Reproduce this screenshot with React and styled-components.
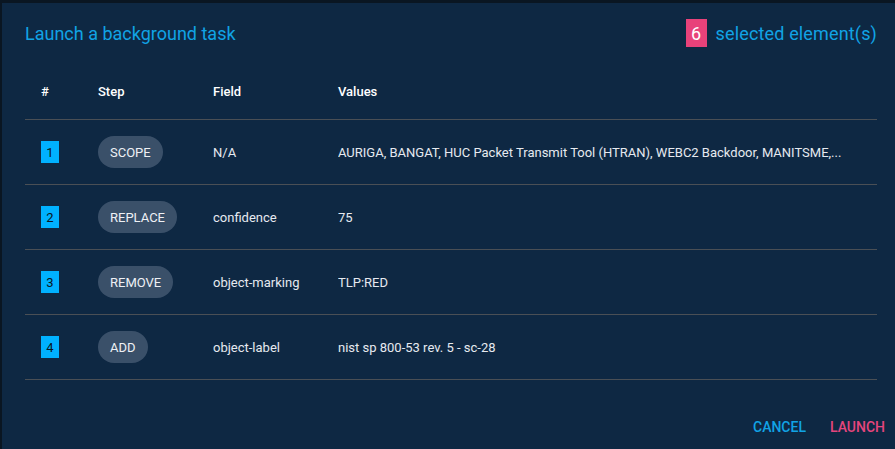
import styled, { createGlobalStyle } from "styled-components";

const GlobalStyle = createGlobalStyle`
  html, body {
    margin: 0;
    padding: 0;
    background: #0a1622;
    overflow: hidden;
  }
  body {
    font-family: Roboto, "Noto Sans", sans-serif;
  }
`;

const Dialog = styled.div`
  margin: 3px 0 0 2px;
  height: 446px;
  background-color: #0e2843;
  box-sizing: border-box;
  display: flex;
  flex-direction: column;
  color: #e9edf2;
`;

const Header = styled.div`
  display: flex;
  align-items: center;
  justify-content: space-between;
  height: 60px;
  padding: 0 18px 0 23px;
`;

const Title = styled.h2`
  margin: 0;
  font-size: 18px;
  font-weight: 400;
  color: #11a3e5;
`;

const Selected = styled.div`
  display: flex;
  align-items: center;
  gap: 9px;
  font-size: 18px;
  letter-spacing: 0.15px;
  color: #11a3e5;
`;

const Count = styled.span`
  display: inline-flex;
  align-items: center;
  justify-content: center;
  width: 21px;
  height: 28px;
  background-color: #e8427a;
  color: #ffffff;
  font-size: 18px;
`;

const Table = styled.div`
  margin: 0 18px 0 23px;
  font-size: 13px;
`;

const Row = styled.div`
  display: grid;
  grid-template-columns: 57px 115px 125px 1fr;
  align-items: center;
  height: ${(p) => (p.$head ? "56px" : "64px")};
  padding-left: 16px;
  border-bottom: 1px solid #4a4f55;
  font-weight: ${(p) => (p.$head ? 500 : 400)};
  color: ${(p) => (p.$head ? "#ffffff" : "#e6eaf0")};
`;

const Index = styled.span`
  display: inline-flex;
  align-items: center;
  justify-content: center;
  width: 18px;
  height: 22px;
  background-color: #00b1ff;
  color: #0a1622;
  font-size: 13px;
`;

const Chip = styled.span`
  justify-self: start;
  display: inline-flex;
  align-items: center;
  height: 32px;
  padding: 0 12px;
  border-radius: 16px;
  background-color: #3a5069;
  color: #eef1f5;
  font-size: 13px;
`;

const Cell = styled.span`
  white-space: nowrap;
  overflow: hidden;
  text-overflow: ellipsis;
`;

const Footer = styled.div`
  margin-top: auto;
  display: flex;
  justify-content: flex-end;
  align-items: center;
  gap: 24px;
  padding: 0 10px 12px 0;
  height: 20px;
`;

const Action = styled.button`
  background: none;
  border: none;
  padding: 0;
  cursor: pointer;
  font-family: inherit;
  font-size: 14px;
  font-weight: 500;
  letter-spacing: 0;
  color: ${(p) => (p.$primary ? "#e5457d" : "#11a3e5")};
`;

const steps = [
  {
    step: "SCOPE",
    field: "N/A",
    values:
      "AURIGA, BANGAT, HUC Packet Transmit Tool (HTRAN), WEBC2 Backdoor, MANITSME,...",
  },
  { step: "REPLACE", field: "confidence", values: "75" },
  { step: "REMOVE", field: "object-marking", values: "TLP:RED" },
  { step: "ADD", field: "object-label", values: "nist sp 800-53 rev. 5 - sc-28" },
];

export default function App() {
  return (
    <>
      <GlobalStyle />
      <Dialog>
        <Header>
          <Title>Launch a background task</Title>
          <Selected>
            <Count>6</Count>
            selected element(s)
          </Selected>
        </Header>

        <Table>
          <Row $head>
            <span>#</span>
            <span>Step</span>
            <span>Field</span>
            <span>Values</span>
          </Row>
          {steps.map((s, i) => (
            <Row key={s.step}>
              <span>
                <Index>{i + 1}</Index>
              </span>
              <Chip>{s.step}</Chip>
              <Cell>{s.field}</Cell>
              <Cell>{s.values}</Cell>
            </Row>
          ))}
        </Table>

        <Footer>
          <Action>CANCEL</Action>
          <Action $primary>LAUNCH</Action>
        </Footer>
      </Dialog>
    </>
  );
}
